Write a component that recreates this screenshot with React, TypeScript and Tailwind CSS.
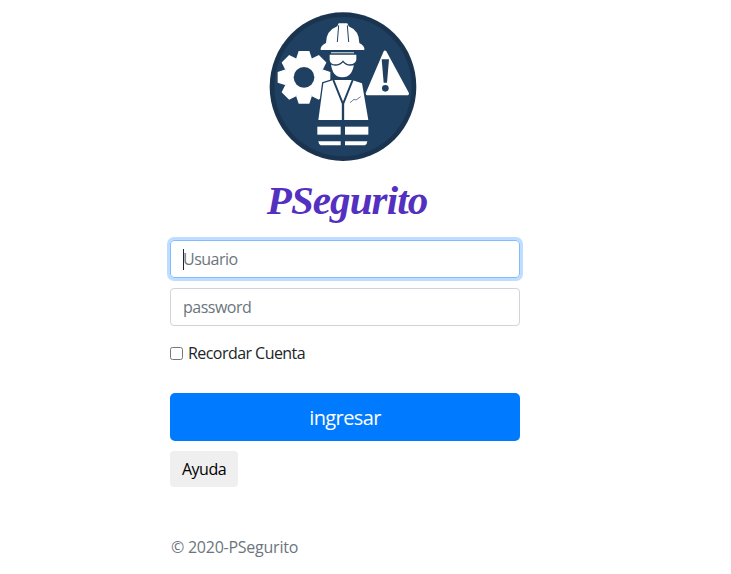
const navy = "#1f4060";

function Logo() {
  return (
    <svg viewBox="0 0 570 510" className="block h-[170px] w-[190px]">
      <ellipse cx="279" cy="260" rx="220" ry="223" fill="#1a3450" />
      <ellipse cx="279" cy="260" rx="206" ry="209" fill={navy} />
      {/* gear */}
      <g transform="translate(162 232)" fill="#fff">
        {[0, 45, 90, 135, 180, 225, 270, 315].map((a) => (
          <path key={a} d="M-24 -55 L-16 -79 H16 L24 -55 Z" transform={`rotate(${a})`} />
        ))}
        <circle r="60" />
        <circle r="31" fill={navy} />
      </g>
      {/* triangle */}
      <path d="M405 157 L472 281 H352 Z" fill="#fff" stroke="#fff" strokeWidth="10" strokeLinejoin="round" />
      <path d="M395 178 H417 L411 248 H401 Z" fill={navy} />
      <circle cx="406" cy="265" r="10" fill={navy} />
      {/* vest */}
      <path
        d="M220 250 L250 240 H306 L336 250 L355 360 H205 Z"
        fill="#fff"
        stroke={navy}
        strokeWidth="8"
        paintOrder="stroke"
      />
      <path d="M250 240 L279 312 L308 240" fill="none" stroke={navy} strokeWidth="6" />
      <path d="M279 312 V360" stroke={navy} strokeWidth="7" />
      <path d="M300 308 L312 298 L318 300 L332 290" fill="none" stroke={navy} strokeWidth="2" />
      <rect x="202" y="380" width="70" height="24" fill="#fff" />
      <rect x="285" y="380" width="70" height="24" fill="#fff" />
      <path d="M205 424 H272 V436 H212 Q206 434 205 424 Z" fill="#fff" />
      <path d="M285 424 H352 Q351 434 345 436 H285 Z" fill="#fff" />
      {/* face and goggles */}
      <path
        d="M243 190 Q246 232 277 232 Q308 232 312 190 V155 H243 Z"
        fill="#fff"
        stroke={navy}
        strokeWidth="8"
        paintOrder="stroke"
      />
      <rect x="235" y="153" width="88" height="4" fill={navy} />
      <path
        d="M237 162 H321 V180 Q318 195 300 195 Q288 195 279 184 Q270 195 256 195 Q239 195 237 180 Z"
        fill="#fff"
        stroke={navy}
        strokeWidth="4"
      />
      {/* helmet */}
      <path
        d="M212 150 Q210 138 228 129 Q228 92 262 79 L266 70 H292 L296 79 Q328 92 328 129 Q345 138 343 150 Z"
        fill="#fff"
      />
      <path d="M266 76 L262 126 M292 76 L296 126" stroke={navy} strokeWidth="3" />
    </svg>
  );
}

export default function App() {
  return (
    <div className="min-h-[574px] bg-white font-['Open_Sans','Noto_Sans',sans-serif] text-[16px] text-[#212529]">
      <div className="ml-[170px] flex w-[350px] flex-col">
        <div className="flex justify-center">
          <Logo />
        </div>
        <h1 className="mt-[6px] pl-[4px] text-center font-['Liberation_Serif',serif] text-[41px] leading-[48px] font-bold text-[#5330c0] italic tracking-[-0.9px]">
          PSegurito
        </h1>
        <div className="relative mt-[16px]">
          <input
            placeholder="Usuario"
            className="block h-[38px] w-full rounded-[4px] border border-[#80bdff] px-3 tracking-[-0.5px] shadow-[0_0_0_3px_rgba(0,123,255,0.25)] outline-none placeholder:text-[#6c757d]"
          />
          <span className="absolute top-[9px] left-[13px] h-[21px] w-px bg-[#212529]" />
        </div>
        <input
          placeholder="password"
          className="mt-[10px] block h-[38px] w-full rounded-[4px] border border-[#ced4da] px-3 tracking-[-0.5px] outline-none placeholder:text-[#6c757d]"
        />
        <label className="mt-[15px] mb-[1px] flex h-[24px] items-center gap-[5px] tracking-[-0.55px]">
          <input type="checkbox" className="m-0 h-[13px] w-[13px]" />
          Recordar Cuenta
        </label>
        <button className="mt-[27px] h-[48px] w-full rounded-[5px] bg-[#007bff] pt-[2px] text-[20px] text-white tracking-[-0.6px]">
          ingresar
        </button>
        <button className="mt-[10px] h-[36px] w-[68px] rounded-[4px] bg-[#efefef] text-black tracking-[-0.5px]">
          Ayuda
        </button>
        <p className="mt-[48px] pl-[1px] leading-[24px] text-[#6c757d] tracking-[-0.25px]">© 2020-PSegurito</p>
      </div>
    </div>
  );
}
